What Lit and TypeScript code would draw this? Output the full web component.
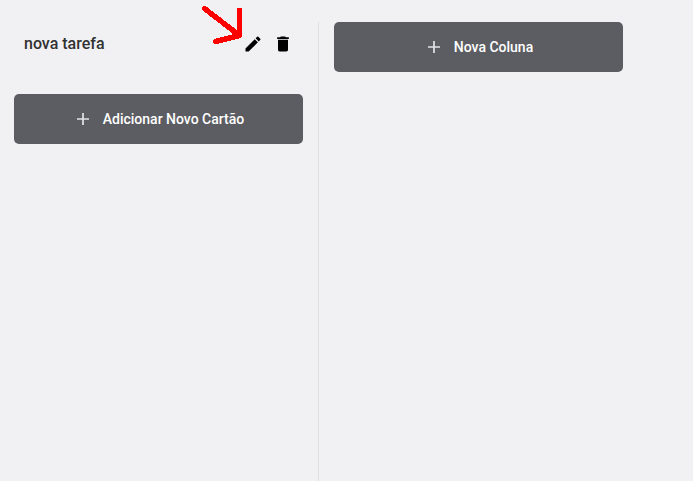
import { LitElement, html, css } from "lit";
import { customElement } from "lit/decorators.js";

const plus = html`<svg class="plus" width="20" height="20" viewBox="0 0 20 20"><path d="M10 4v12M4 10h12" stroke="#e4e4e8" stroke-width="1.7" fill="none"/></svg>`;

@customElement("app-root")
export class AppRoot extends LitElement {
  static styles = css`
    :host { display: block; height: 481px; overflow: hidden; background: #f1f1f4; font-family: Roboto, sans-serif; }
    .board { position: relative; display: flex; height: 481px; padding: 22px 0 0 14px; box-sizing: border-box; }
    .column { width: 304px; box-sizing: content-box; border-right: 1px solid #e1e1e4; }
    .head { display: flex; align-items: center; height: 44px; width: 289px; padding: 0 10px; box-sizing: border-box; margin-bottom: 28px; }
    .title { flex: 1; font-size: 16px; font-weight: 500; color: #323232; line-height: 44px; }
    .icon { width: 20px; height: 20px; fill: #000; display: block; }
    .icons { display: flex; gap: 10px; }
    .btn { display: flex; align-items: center; justify-content: center; gap: 10px; width: 289px; height: 50px; border: 0; padding: 0; border-radius: 5px; background: #5c5d62; color: #fff; font: 500 14px Roboto, sans-serif; }
    .next { margin-left: 15px; }
    .arrow { position: absolute; left: 198px; top: 0; }
  `;
  render() {
    return html`<main class="board">
      <section class="column">
        <header class="head"><span class="title">nova tarefa</span>
          <span class="icons">
            <svg class="icon" viewBox="0 0 24 24"><path d="M3 17.25V21h3.75L17.81 9.94l-3.75-3.75L3 17.25zM20.71 7.04a1 1 0 0 0 0-1.41l-2.34-2.34a1 1 0 0 0-1.41 0l-1.83 1.83 3.75 3.75 1.83-1.83z"/></svg>
            <svg class="icon" viewBox="0 0 24 24"><path d="M6 19c0 1.1.9 2 2 2h8c1.1 0 2-.9 2-2V7H6v12zM19 4h-3.500l-1-1h-5l-1 1H5v2h14V4z"/></svg>
          </span>
        </header>
        <button class="btn">${plus}<span>Adicionar Novo Cartão</span></button>
      </section>
      <section class="next"><button class="btn">${plus}<span>Nova Coluna</span></button></section>
      <svg class="arrow" width="50" height="50" viewBox="198 0 50 50"><path d="M204.500 8.500L239.500 35.500M239.500 10.500V35.500L215.500 41.500" fill="none" stroke="#f00" stroke-width="5.400" stroke-linecap="round" stroke-linejoin="round" shape-rendering="crispEdges"/></svg>
    </main>`;
  }
}
